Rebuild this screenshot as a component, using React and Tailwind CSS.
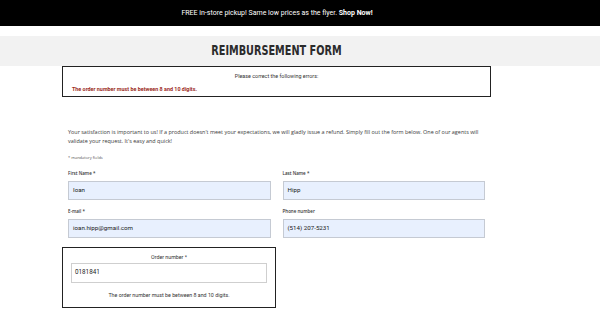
export default function App() {
  return (
    <div className="w-[600px] h-[330px] overflow-hidden bg-white" style={{ fontFamily: '"Open Sans", sans-serif' }}>
      <div className="h-[26px] bg-black flex items-center justify-center text-white text-[7px]" style={{ fontFamily: 'Roboto, sans-serif' }}>
        <span className="ml-[-46px]">
          FREE in-store pickup! Same low prices as the flyer. <span className="font-bold">Shop Now!</span>
        </span>
      </div>

      <div className="mt-[10px] h-[30px] bg-[#f2f2f2] flex items-center">
        <div className="ml-[62px] w-[429px] flex justify-center">
          <h1
            className="inline-block scale-x-[0.8] text-[#2b2b2b] text-[13.5px] font-bold leading-none"
            style={{ fontFamily: '"DejaVu Sans Condensed", "DejaVu Sans", sans-serif' }}
          >
            REIMBURSEMENT FORM
          </h1>
        </div>
      </div>

      <div className="ml-[62px] w-[429px]">
        <div className="h-[31px] border border-[#222] px-[9px] pt-[5px] text-[5.4px]" style={{ fontFamily: 'Roboto, sans-serif' }}>
          <p className="text-center text-[#333] leading-[8px]">Please correct the following errors:</p>
          <p className="mt-[5px] font-bold text-[#9b2a1c] leading-[8px]">The order number must be between 8 and 10 digits.</p>
        </div>

        <div className="px-[6px] pt-[31px]">
          <p className="text-[5.45px] leading-[9px] text-[#3a3a3a]">
            Your satisfaction is important to us! If a product doesn&apos;t meet your expectations, we will gladly issue a refund. Simply fill out the form below. One of our agents will validate your request. It&apos;s easy and quick!
          </p>
          <p className="mt-[8px] text-[4px] leading-[7px] text-[#555]">* mandatory fields</p>

          <div className="mt-[9px] grid grid-cols-2 gap-x-[12px]">
            <Field label="First Name *" value="Ioan" />
            <Field label="Last Name *" value="Hipp" />
          </div>
          <div className="mt-[8px] grid grid-cols-2 gap-x-[12px]">
            <Field label="E-mail *" value="ioan.hipp@gmail.com" />
            <Field label="Phone number" value="(514) 207-5231" />
          </div>
        </div>

        <div className="mt-[9px] w-[214px] h-[61px] border border-[#222] px-[8px] pt-[6px] text-[5.3px]" style={{ fontFamily: 'Roboto, sans-serif' }}>
          <p className="text-center text-[#333] leading-[6px]">Order number *</p>
          <div className="mt-[3px] h-[20px] border border-[#cfcfcf] bg-white flex items-center px-[3px] text-[6.3px] text-[#222]">
            0181841
          </div>
          <p className="mt-[9px] text-center text-[#333] leading-[7px]">The order number must be between 8 and 10 digits.</p>
        </div>
      </div>
    </div>
  )
}

function Field({ label, value }) {
  return (
    <div>
      <label className="block text-[4.5px] font-semibold text-[#333] leading-[6px]">{label}</label>
      <div
        className="mt-[5px] h-[19px] border border-[#c5cad3] bg-[#e8f0fe] flex items-center px-[4px] text-[6.2px] text-[#222]"
        style={{ fontFamily: 'Roboto, sans-serif' }}
      >
        {value}
      </div>
    </div>
  )
}
